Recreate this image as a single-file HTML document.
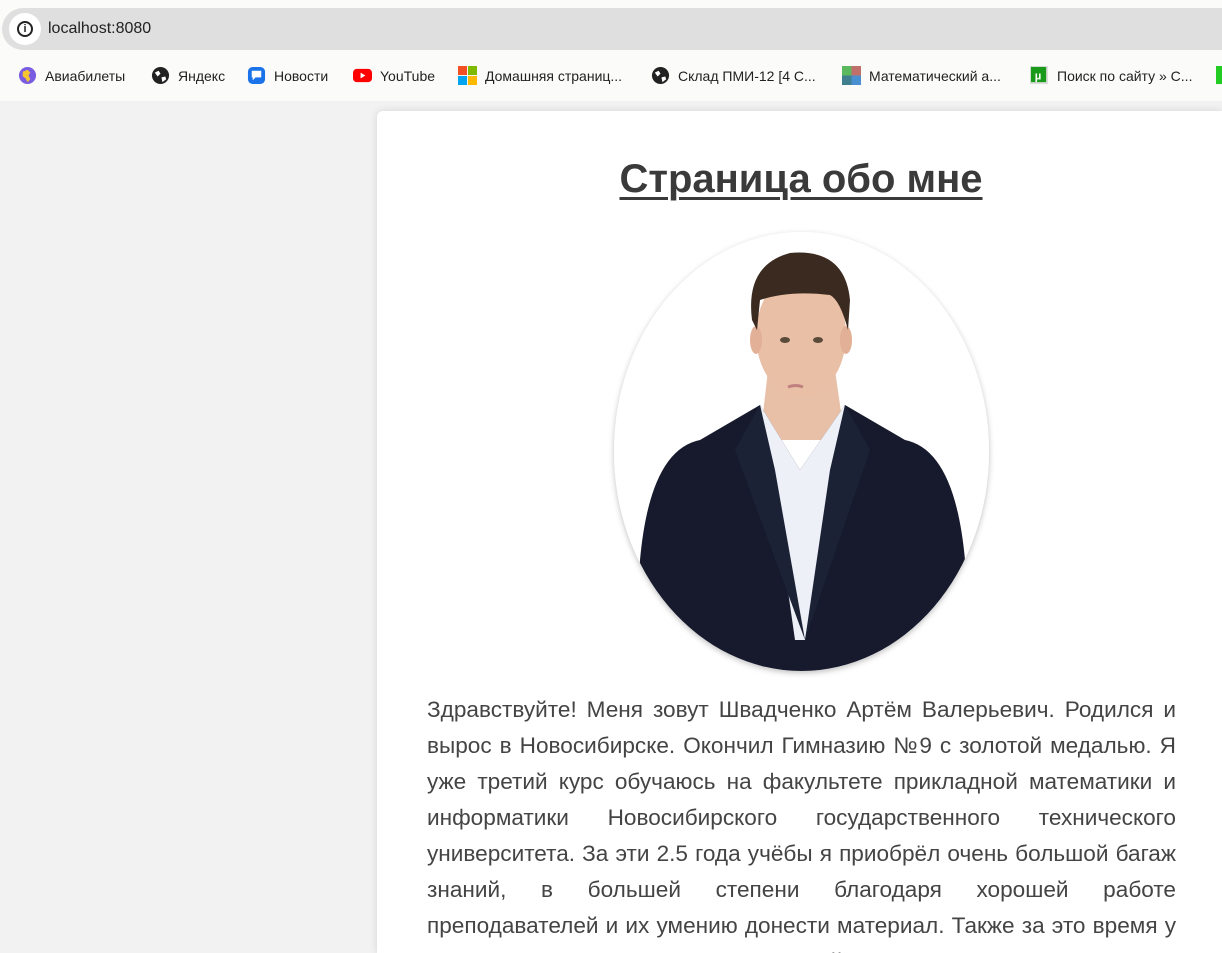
<!DOCTYPE html>
<html><head><meta charset="utf-8"><style>
*{margin:0;padding:0;box-sizing:border-box}
html,body{width:1222px;height:953px;overflow:hidden;background:#f2f2f2;font-family:"Liberation Sans",Arial,sans-serif}
.top{position:absolute;left:0;top:0;width:1222px;height:101px;background:#fbfbfa}
.addr{position:absolute;left:2px;top:8px;width:1240px;height:42px;border-radius:21px;background:#dfdfdf}
.info{position:absolute;left:7px;top:5px;width:32px;height:32px;border-radius:50%;background:#fff}
.info i{position:absolute;left:8px;top:8px;width:16px;height:16px;border:2px solid #222;border-radius:50%;font-style:normal;font:bold 11px/12px "Liberation Sans";text-align:center;color:#222}
.url{position:absolute;left:46px;top:12px;font-size:16px;color:#222}
.bm{position:absolute;top:66px;font-size:14px;color:#222;white-space:nowrap;height:20px;line-height:20px}
.bm .ic{display:inline-block;width:19px;height:19px;vertical-align:-4px;margin-right:8px}
.card{position:absolute;left:377px;top:111px;width:845px;height:842px;background:#fff;border-radius:6px 0 0 0;box-shadow:0 0 8px rgba(0,0,0,.12)}
h1{position:absolute;width:848px;top:157px;text-align:center;font-size:40px;font-weight:bold;color:#3a3a3a;text-decoration:underline;text-decoration-thickness:3px;text-underline-offset:5px}
.pw{position:absolute;left:427px;top:692px;width:749px;height:261px;overflow:hidden}
p{width:749px;font-size:22.6px;line-height:36px;color:#444;text-align:justify}
</style></head><body>
<div class="top">
 <div class="addr"><div class="info"><i>i</i></div><div class="url">localhost:8080</div></div>
 <div class="bm" style="left:18px"><svg class="ic" viewBox="0 0 20 20"><circle cx="10" cy="10" r="9" fill="#7a5ce0"/><path d="M5 6l5-2 3 3-2 3 2 4-3 3-2-4-3-2z" fill="#f5c431"/></svg>Авиабилеты</div>
 <div class="bm" style="left:151px"><svg class="ic" viewBox="0 0 20 20"><circle cx="10" cy="10" r="9" fill="#222"/><path d="M4 7l4-2 2 3-3 3zM11 12l4-1 1 3-4 3z" fill="#fff"/></svg>Яндекс</div>
 <div class="bm" style="left:247px"><svg class="ic" viewBox="0 0 20 20"><rect x="1" y="1" width="18" height="18" rx="5" fill="#1a73e8"/><path d="M5 5h10v7h-6l-3 3v-3H5z" fill="#fff"/></svg>Новости</div>
 <div class="bm" style="left:353px"><svg class="ic" viewBox="0 0 20 20"><rect x="0" y="3" width="20" height="14" rx="4" fill="#f00"/><path d="M8 7l5 3-5 3z" fill="#fff"/></svg>YouTube</div>
 <div class="bm" style="left:458px"><svg class="ic" viewBox="0 0 20 20"><rect x="0" y="0" width="9.5" height="9.5" fill="#f25022"/><rect x="10.5" y="0" width="9.5" height="9.5" fill="#7fba00"/><rect x="0" y="10.5" width="9.5" height="9.5" fill="#00a4ef"/><rect x="10.5" y="10.5" width="9.5" height="9.5" fill="#ffb900"/></svg>Домашняя страниц...</div>
 <div class="bm" style="left:651px"><svg class="ic" viewBox="0 0 20 20"><circle cx="10" cy="10" r="9" fill="#222"/><path d="M4 7l4-2 2 3-3 3zM11 12l4-1 1 3-4 3z" fill="#fff"/></svg>Склад ПМИ-12 [4 С...</div>
 <div class="bm" style="left:842px"><svg class="ic" viewBox="0 0 20 20"><rect x="0" y="0" width="10" height="10" fill="#5cb85c"/><rect x="10" y="0" width="10" height="10" fill="#c0706a"/><rect x="0" y="10" width="10" height="10" fill="#3f7f8f"/><rect x="10" y="10" width="10" height="10" fill="#4a90d0"/></svg>Математический а...</div>
 <div class="bm" style="left:1030px"><svg class="ic" viewBox="0 0 20 20"><rect x="0" y="0" width="19" height="19" fill="#ddd"/><rect x="1" y="1" width="16" height="16" fill="#1a9a1a"/><text x="5" y="14" font-size="12" fill="#fff" font-family="Liberation Sans" font-weight="bold">µ</text></svg>Поиск по сайту » С...</div>
 <div class="bm" style="left:1216px"><svg class="ic" viewBox="0 0 20 20"><rect x="0" y="0" width="19" height="19" fill="#2c2"/></svg></div>
</div>
<div class="card"></div>
<h1 style="left:377px">Страница обо мне</h1>
<svg style="position:absolute;left:0;top:0" width="1222" height="953">
 <defs><clipPath id="c"><ellipse cx="801.5" cy="451.5" rx="187.5" ry="219.5"/></clipPath>
 <filter id="s" x="-20%" y="-20%" width="140%" height="140%"><feDropShadow dx="0" dy="2" stdDeviation="3" flood-color="#000" flood-opacity=".25"/></filter></defs>
 <ellipse cx="801.5" cy="451.5" rx="187.5" ry="219.5" fill="#fff" filter="url(#s)"/>
 <g clip-path="url(#c)">
  <path d="M768 370 L835 370 L845 440 L760 440Z" fill="#e8c0a8"/>
  <path d="M640 560 Q650 450 700 440 L760 405 L800 470 L845 405 L905 440 Q955 450 965 560 L975 700 L630 700Z" fill="#161a2c"/>
  <path d="M760 405 L800 470 L845 405 L840 430 L805 640 L795 640 L765 430Z" fill="#eef0f8"/>
  <path d="M760 405 L775 470 L805 640 L735 450Z" fill="#1c2236"/>
  <path d="M845 405 L830 470 L805 640 L870 450Z" fill="#1c2236"/>
  <ellipse cx="801" cy="335" rx="45" ry="62" fill="#e9bfa6"/>
  <ellipse cx="756" cy="340" rx="6" ry="14" fill="#e2b096"/><ellipse cx="846" cy="340" rx="6" ry="14" fill="#e2b096"/>
  <path d="M752 320 Q745 265 790 253 Q845 248 850 300 L848 330 Q840 300 830 295 Q790 290 760 300 L757 330Z" fill="#3b2a20"/>
  <ellipse cx="785" cy="340" rx="5" ry="3" fill="#5a4a3a"/><ellipse cx="818" cy="340" rx="5" ry="3" fill="#5a4a3a"/>
  <path d="M788 387 Q796 384 803 387" stroke="#c08080" stroke-width="3" fill="none"/>
 </g>
</svg>
<div class="pw"><p>Здравствуйте! Меня зовут Швадченко Артём Валерьевич. Родился и вырос в Новосибирске. Окончил Гимназию №9 с золотой медалью. Я уже третий курс обучаюсь на факультете прикладной математики и информатики Новосибирского государственного технического университета. За эти 2.5 года учёбы я приобрёл очень большой багаж знаний, в большей степени благодаря хорошей работе преподавателей и их умению донести материал. Также за это время у меня появилось много новых друзей и знакомых, с которыми мы вместе учимся и отдыхаем.</p></div>
</body></html>
